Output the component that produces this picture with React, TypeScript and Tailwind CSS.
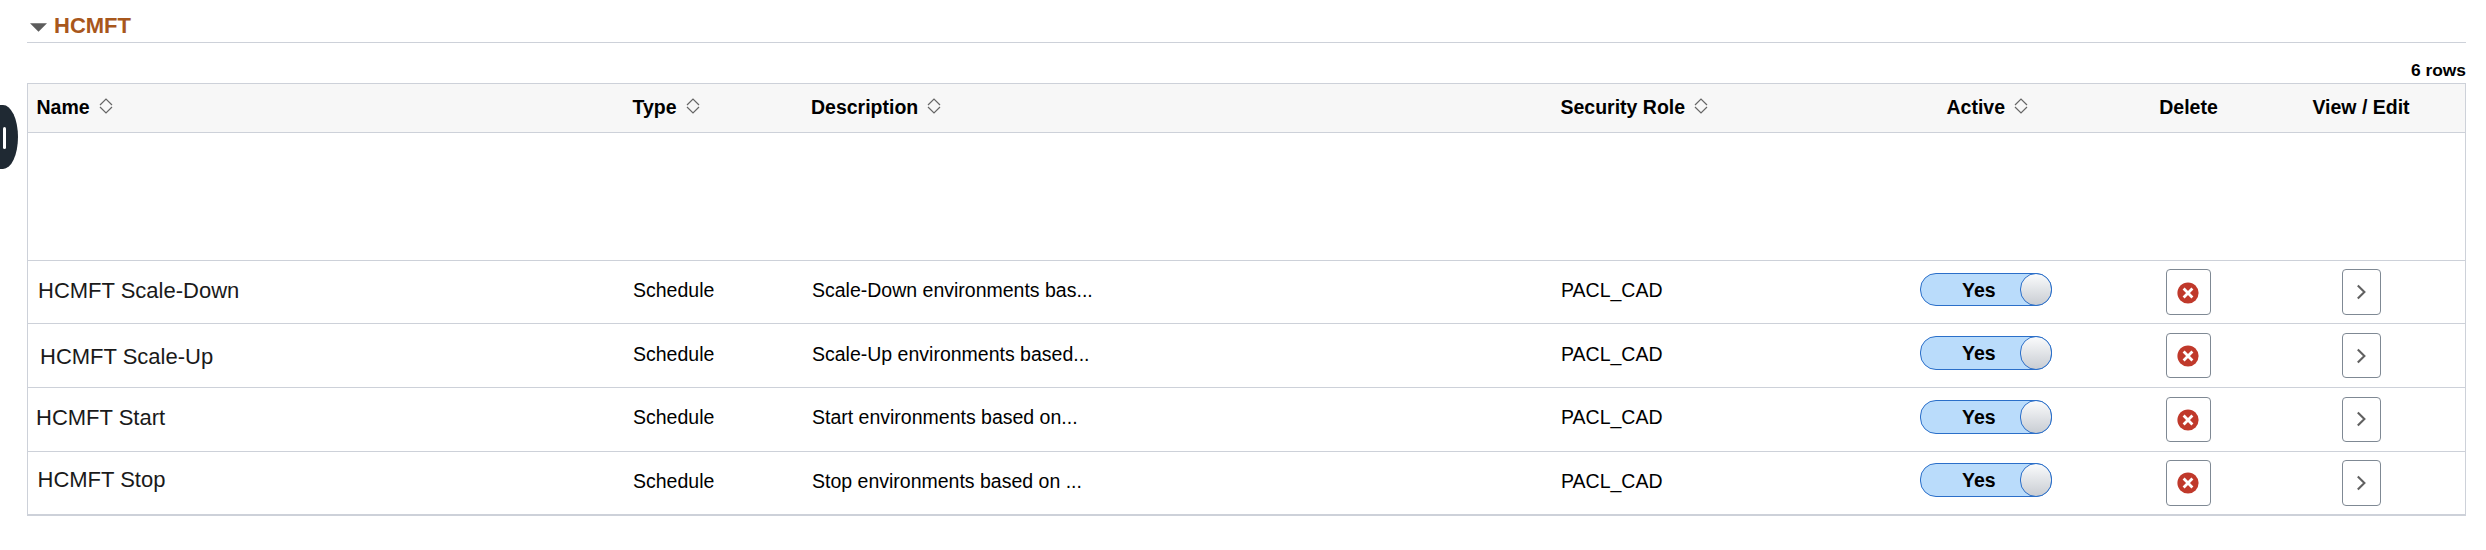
const cols = "grid grid-cols-[605px_179px_749px_359px_180px_177px_169px_19px]";

type Row = {
  name: string;
  description: string;
  height: string;
  namePos: string;
  textPos: string;
  toggle: string;
  button: string;
  icon: string;
  chevron: string;
};

const rows: Row[] = [
  { name: "HCMFT Scale-Down", description: "Scale-Down environments bas...", height: "h-[63px]", namePos: "pl-[10px] pt-[17px]", textPos: "pt-[17px]", toggle: "mt-[12px] h-[33px]", button: "mt-[8px] h-[46px]", icon: "mt-[12px]", chevron: "mt-[14px]" },
  { name: "HCMFT Scale-Up", description: "Scale-Up environments based...", height: "h-[64px]", namePos: "pl-[12px] pt-[20px]", textPos: "pt-[18px]", toggle: "mt-[12px] h-[34px]", button: "mt-[9px] h-[45px]", icon: "mt-[11px]", chevron: "mt-[14px]" },
  { name: "HCMFT Start", description: "Start environments based on...", height: "h-[64px]", namePos: "pl-[8px] pt-[17px]", textPos: "pt-[17px]", toggle: "mt-[12px] h-[34px]", button: "mt-[9px] h-[45px]", icon: "mt-[11px]", chevron: "mt-[13px]" },
  { name: "HCMFT Stop", description: "Stop environments based on ...", height: "h-[63px]", namePos: "pl-[9.5px] pt-[15px]", textPos: "pt-[17px]", toggle: "mt-[11px] h-[34px]", button: "mt-[8px] h-[46px]", icon: "mt-[11px]", chevron: "mt-[14px]" },
];

function SortIcon() {
  return (
    <svg className="mt-[14px] h-[16px] w-[14px] shrink-0" viewBox="0 0 14 16" fill="none" stroke="#666" strokeWidth="1.2">
      <path d="M1 7 7 1l6 6M1 9l6 6 6-6" />
    </svg>
  );
}

function Header({ label, sort, className = "" }: { label: string; sort?: boolean; className?: string }) {
  return (
    <div className={`flex gap-[9px] whitespace-nowrap ${className}`}>
      <span className="pt-[11px] leading-[24px]">{label}</span>
      {sort && <SortIcon />}
    </div>
  );
}

function Toggle({ className }: { className: string }) {
  return (
    <div className={`flex w-[132px] rounded-[16px] border border-[#2b6fc9] bg-[#badcfb] ${className}`}>
      <span className="w-[99px] shrink-0 pt-[4px] pl-[41px] leading-[24px] font-bold">Yes</span>
      <span className="-my-px w-[32px] shrink-0 rounded-[16px] border border-[#2b6fc9] bg-linear-to-b from-[#fafbfc] to-[#c9cdd3]" />
    </div>
  );
}

export default function App() {
  return (
    <div className="flex h-[550px] w-[2486px] overflow-hidden bg-white font-['Liberation_Sans',Arial,sans-serif] text-[19.5px] text-black">
      <aside className="w-[27px] shrink-0 pt-[105px]">
        <div className="flex h-[64px] w-[18px] [border-radius:0_15px_15px_0/0_32px_32px_0] bg-[#1f2933] pt-[22px] pl-[3px]">
          <span className="h-[22px] w-[3px] rounded-full bg-white" />
        </div>
      </aside>
      <main className="w-[2439px] shrink-0">
        <header className="flex h-[43px] border-b border-[#cdd1d9]">
          <svg className="mt-[22.5px] ml-[2.5px] h-[9px] w-[17px] shrink-0" viewBox="0 0 17 9">
            <path d="M0 .3h17L8.5 8.7z" fill="#5c5c5c" />
          </svg>
          <h2 className="ml-[7.5px] pt-[13px] text-[22px] leading-[26px] font-bold text-[#a8571c]">HCMFT</h2>
        </header>
        <div className="h-[40px] pt-[17px] text-right text-[17.4px] leading-[20px] font-bold">6 rows</div>
        <section className="border border-b-2 border-[#cdd1d9]">
          <div className={`${cols} h-[49px] border-b border-[#cdd1d9] bg-[#f7f7f7] font-bold`}>
            <Header label="Name" sort className="pl-[8.5px]" />
            <Header label="Type" sort className="-ml-[0.5px]" />
            <Header label="Description" sort className="-ml-px" />
            <Header label="Security Role" sort className="-ml-[0.5px]" />
            <Header label="Active" sort className="pl-[26.5px]" />
            <Header label="Delete" className="justify-center" />
            <Header label="View / Edit" className="justify-center pr-px" />
          </div>
          <div className="h-[127px]" />
          {rows.map((r) => (
            <div key={r.name} className={`${cols} border-t border-[#cdd1d9] ${r.height}`}>
              <div className={`text-[22px] leading-[26px] text-[#1a1a1a] ${r.namePos}`}>{r.name}</div>
              <div className={`leading-[24px] ${r.textPos}`}>Schedule</div>
              <div className={`leading-[24px] ${r.textPos}`}>{r.description}</div>
              <div className={`leading-[24px] ${r.textPos}`}>PACL_CAD</div>
              <Toggle className={r.toggle} />
              <button aria-label="Delete" className={`mx-auto flex w-[45px] items-start justify-center rounded-[4px] border border-[#7f8994] bg-white ${r.button}`}>
                <svg className={`mr-px h-[22px] w-[22px] ${r.icon}`} viewBox="0 0 22 22">
                  <circle cx="11" cy="11" r="10.6" fill="#c0392b" />
                  <path d="m6.6 6.6 8.8 8.8M15.4 6.6l-8.8 8.8" stroke="#fff" strokeWidth="2.8" />
                </svg>
              </button>
              <button aria-label="View / Edit" className={`mx-auto flex w-[39px] items-start rounded-[4px] border border-[#7f8994] bg-white pl-[14px] ${r.button}`}>
                <svg className={`h-[16px] w-[10px] ${r.chevron}`} viewBox="0 0 10 16" fill="none" stroke="#616161" strokeWidth="2.1">
                  <path d="m.8 1.4 6.6 6.6L.8 14.6" />
                </svg>
              </button>
            </div>
          ))}
        </section>
      </main>
    </div>
  );
}
